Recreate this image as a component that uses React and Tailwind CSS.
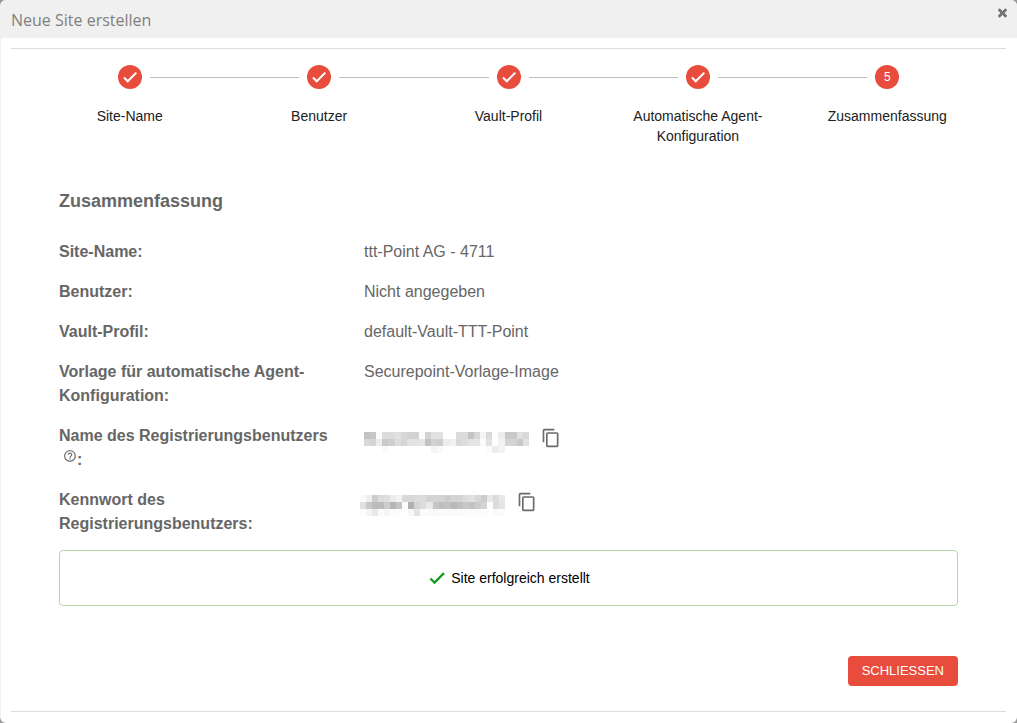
import React from 'react';
import clsx from 'clsx';
import { FaTimes } from 'react-icons/fa';
import { MdContentCopy, MdHelpOutline } from 'react-icons/md';

const steps = [
  { label: 'Site-Name', done: true },
  { label: 'Benutzer', done: true },
  { label: 'Vault-Profil', done: true },
  { label: 'Automatische Agent-Konfiguration', done: true },
  { label: 'Zusammenfassung', done: false },
];

// Grey levels of the redacted values, one hex pair per block
const userMask = [
  'c2 c6 fc dc dc e0 d8 d3 d3 fc d2 e2 e2 ff ff db db c4 d6 f5 da ff ec c8 c9 e0 d8',
  'd9 d5 ec c9 cf dc d5 e2 e2 e6 c2 d2 ce ec f2 d8 de e4 e6 fb e2 ff f2 d4 d4 c8 e0',
  'ff ff ff fa ff ff ff ff ff ff ff f4 f9 ff ff ff ff ff ff ff fb ec f3 ff ff ff ff',
];

const passwordMask = [
  'fa ee cc dc de ec f3 d8 d8 dc dc d4 d4 d4 cc d4 d4 dc e2 d8 cc e8 dc e8',
  'e0 c8 bc bc cc b6 c4 fc b0 d4 dc ea c6 be c2 b8 c0 c8 c2 cc d4 fe dc e4',
  'fd f4 e8 fb f6 fc fc ff f8 e4 fb fa f8 fa fa fa fa fc fc fc fc ff fa fb',
];

const Redacted = ({ rows, label, className }) => {
  const cells = rows.map((row) => row.split(' '));
  return (
    <svg
      role="img"
      aria-label={label}
      className={className}
      viewBox={`0 0 ${cells[0].length} ${cells.length}`}
      preserveAspectRatio="none"
      shapeRendering="crispEdges"
    >
      {cells.map((row, y) =>
        row.map((level, x) => (
          <rect key={`${x}-${y}`} x={x} y={y} width="1" height="1" fill={`#${level}${level}${level}`} />
        ))
      )}
    </svg>
  );
};

const Check = ({ className }) => (
  <svg viewBox="0 0 24 24" aria-hidden="true" className={className}>
    <path d="M4 12.6l5 5L20.4 6.2" fill="none" stroke="currentColor" strokeWidth="2.7" />
  </svg>
);

const CopyButton = ({ label }) => (
  <button type="button" aria-label={label} className="text-[#6b6b6b]">
    <MdContentCopy size={20} />
  </button>
);

const Stepper = () => (
  <ol className="grid grid-cols-5 px-6 pt-4">
    {steps.map((step, i) => (
      <li key={step.label} className="flex flex-col items-center">
        <div className="flex w-full items-center gap-2">
          <span className={clsx('h-px flex-1', i > 0 && 'bg-[#bdbdbd]')} />
          <span className="flex size-6 items-center justify-center rounded-full bg-[#e84c3d] text-xs text-white">
            {step.done ? <Check className="size-[18px]" /> : i + 1}
          </span>
          <span className={clsx('h-px flex-1', i < steps.length - 1 && 'bg-[#bdbdbd]')} />
        </div>
        <span className="mt-[17px] px-2 text-center text-sm leading-5 text-[#212121]">{step.label}</span>
      </li>
    ))}
  </ol>
);

const Row = ({ label, children }) => (
  <div className="grid grid-cols-3 gap-x-4 py-2">
    <dt className="font-bold">{label}</dt>
    <dd className="col-span-2 flex items-start">{children}</dd>
  </div>
);

const App = () => {
  return (
    <div className="min-h-screen bg-[#999999]">
      <div
        role="dialog"
        aria-labelledby="dialog-title"
        className="min-h-screen overflow-hidden rounded-md border-l border-[#f0f0f0] bg-white font-['Liberation_Sans',Arial,sans-serif] text-[#666666]"
      >
        <header className="flex items-start justify-between bg-[#f0f0f0] px-[10px]">
          <h1 id="dialog-title" className="pt-[9px] pb-[7px] font-['Open_Sans',sans-serif] text-base leading-[22px] text-[#808080]">
            Neue Site erstellen
          </h1>
          <button type="button" aria-label="Schließen" className="mt-[7px] text-[#757575]">
            <FaTimes size={12} className="w-[9px] stroke-current stroke-[40]" />
          </button>
        </header>

        <div className="mt-[10px] mr-[11px] ml-[10px] border-y border-[#dddddd] pb-[25px]">
          <Stepper />

          <main className="px-12 pt-[43px]">
            <h2 className="text-lg leading-6 font-bold">Zusammenfassung</h2>

            <dl className="mt-[19px] text-base leading-6">
              <Row label="Site-Name:">ttt-Point AG - 4711</Row>
              <Row label="Benutzer:">Nicht angegeben</Row>
              <Row label="Vault-Profil:">default-Vault-TTT-Point</Row>
              <Row label="Vorlage für automatische Agent-Konfiguration:">Securepoint-Vorlage-Image</Row>
              <Row
                label={
                  <>
                    Name des Registrierungsbenutzers{' '}
                    <span className="whitespace-nowrap">
                      <MdHelpOutline size={14} className="ml-1 inline align-[2px]" />:
                    </span>
                  </>
                }
              >
                <div className="flex items-start gap-3 pt-1">
                  <Redacted rows={userMask} label="Name verborgen" className="mt-1 h-[21px] w-[165px]" />
                  <CopyButton label="Name kopieren" />
                </div>
              </Row>
              <Row label="Kennwort des Registrierungsbenutzers:">
                <div className="-ml-1 flex items-start gap-3 pt-1">
                  <Redacted rows={passwordMask} label="Kennwort verborgen" className="mt-[3px] h-[21px] w-[145px]" />
                  <CopyButton label="Kennwort kopieren" />
                </div>
              </Row>
            </dl>

            <div
              role="status"
              className="mt-[6px] flex h-14 items-center justify-center gap-1 rounded border border-[#b5d6a7] text-sm text-black"
            >
              <Check className="size-5 text-[#0f9d1f]" />
              Site erfolgreich erstellt
            </div>

            <div className="mt-[50px] flex justify-end">
              <button
                type="button"
                className="h-[30px] rounded bg-[#e84c3d] px-[14px] text-[13px] text-white uppercase"
              >
                Schliessen
              </button>
            </div>
          </main>
        </div>
      </div>
    </div>
  );
};

export default App;
